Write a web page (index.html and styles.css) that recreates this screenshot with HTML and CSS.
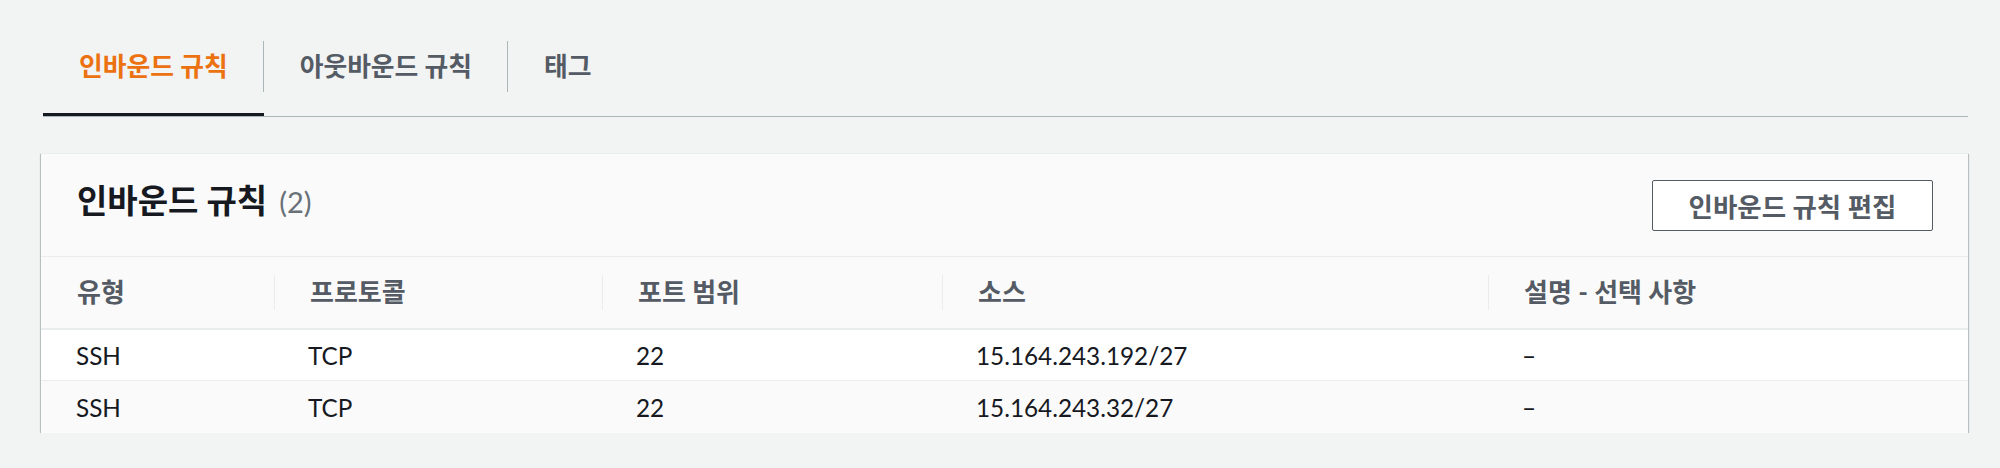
FILE: index.html
```html
<!DOCTYPE html>
<html lang="ko">
<head>
<meta charset="utf-8">
<title>보안 그룹 규칙</title>
<link rel="stylesheet" href="styles.css">
</head>
<body>
<div class="page">
  <div class="tabs">
    <div class="tab tab-active"><span class="tab-label">인바운드 규칙</span></div>
    <div class="tab"><span class="tab-label">아웃바운드 규칙</span></div>
    <div class="tab"><span class="tab-label tab-last">태그</span></div>
  </div>

  <section class="card">
    <header class="card-header">
      <h2 class="card-title">인바운드 규칙 <span class="count">(2)</span></h2>
      <button class="btn">인바운드 규칙 편집</button>
    </header>
    <div class="table">
      <div class="row head">
        <div class="cell c1"><span class="hd">유형</span></div>
        <div class="cell"><span class="hd sep">프로토콜</span></div>
        <div class="cell"><span class="hd sep">포트 범위</span></div>
        <div class="cell"><span class="hd sep">소스</span></div>
        <div class="cell"><span class="hd sep">설명 - 선택 사항</span></div>
      </div>
      <div class="row body odd">
        <div class="cell c1">SSH</div>
        <div class="cell">TCP</div>
        <div class="cell">22</div>
        <div class="cell">15.164.243.192/27</div>
        <div class="cell">–</div>
      </div>
      <div class="row body even last">
        <div class="cell c1">SSH</div>
        <div class="cell">TCP</div>
        <div class="cell">22</div>
        <div class="cell">15.164.243.32/27</div>
        <div class="cell">–</div>
      </div>
    </div>
  </section>
</div>
</body>
</html>
```
FILE: styles.css
```css
* { box-sizing: border-box; }

html, body {
  margin: 0;
  padding: 0;
  background: #f2f3f3;
}

body {
  font-family: Lato, "Noto Sans CJK KR", sans-serif;
  color: #16191f;
  font-size: 24.3px;
}

.page {
  margin: 0 32px 0 41px;
  padding-top: 41px;
}

/* Tabs */
.tabs {
  display: flex;
  border-bottom: 1px solid #aab7b8;
  margin-left: 2px;
}

.tab {
  padding-bottom: 21px;
  border-bottom: 3px solid transparent;
}

.tab-active {
  border-bottom-color: #16191f;
}

.tab-label {
  display: block;
  height: 51px;
  line-height: 51px;
  padding: 0 35px 0 36px;
  border-right: 1px solid #aab7b8;
  font-weight: 700;
  font-size: 25.8px;
  color: #545b64;
  white-space: nowrap;
}

.tab-active .tab-label {
  color: #ec7211;
}

.tab-label.tab-last {
  border-right: none;
}

/* Card */
.card {
  margin-top: 36px;
  background: #fafafa;
  border-top: 1px solid #eaeded;
  box-shadow: 0 1px 1px 0 rgba(0, 28, 36, 0.4),
              1px 1px 1px 0 rgba(0, 28, 36, 0.18),
              -1px 1px 1px 0 rgba(0, 28, 36, 0.18);
}

.card-header {
  height: 102px;
  display: flex;
  align-items: center;
  justify-content: space-between;
  padding: 0 35px 0 36px;
}

.card-title {
  margin: 0 0 8px 0;
  font-size: 33px;
  line-height: 44px;
  font-weight: 700;
  color: #16191f;
  white-space: nowrap;
}

.count {
  font-size: 29px;
  font-weight: 400;
  color: #687078;
  margin-left: 4px;
}

.btn {
  width: 281px;
  height: 51px;
  background: #ffffff;
  border: 1px solid #545b64;
  border-radius: 2px;
  color: #545b64;
  font-family: Lato, "Noto Sans CJK KR", sans-serif;
  font-size: 26.5px;
  font-weight: 700;
  padding: 0;
  white-space: nowrap;
}

/* Table */
.table {
  border-top: 1px solid #eaeded;
}

.row {
  display: grid;
  grid-template-columns: 233px 328px 340px 546px 1fr;
}

.row.head {
  height: 73px;
  border-bottom: 2px solid #eaeded;
  background: #fafafa;
  align-items: center;
}

.row.body {
  height: 51px;
  border-bottom: 1px solid #eaeded;
  align-items: center;
}

.row.body.last {
  height: 52px;
  border-bottom: none;
}

.row.odd { background: #ffffff; }
.row.even { background: #fafafa; }

.cell {
  padding-left: 34px;
  white-space: nowrap;
}

.row.body .cell.c1 {
  padding-left: 35px;
}

.row.head .cell {
  padding-left: 0;
}

.row.head .cell.c1 {
  padding-left: 36px;
}

.hd {
  display: block;
  height: 35px;
  line-height: 35px;
  font-size: 26px;
  font-weight: 700;
  color: #545b64;
}

.hd.sep {
  border-left: 1px solid #eaeded;
  padding-left: 35px;
}
```
